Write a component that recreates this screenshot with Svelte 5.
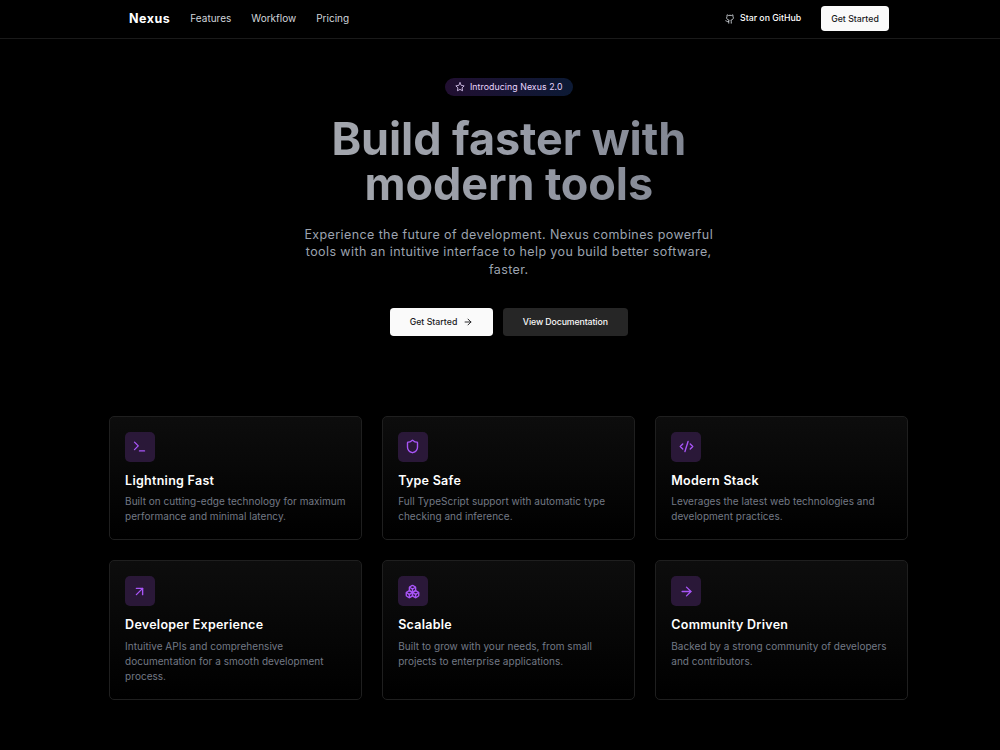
<script>
  const navLinks = ['Features', 'Workflow', 'Pricing'];

  // Feature cards, icons are 24x24 stroke paths
  const features = [
    {
      title: 'Lightning Fast',
      description: 'Built on cutting-edge technology for maximum performance and minimal latency.',
      icon: ['m4 17 6-6-6-6', 'M12 19h8']
    },
    {
      title: 'Type Safe',
      description: 'Full TypeScript support with automatic type checking and inference.',
      icon: [
        'M20 13c0 5-3.5 7.5-7.66 8.95a1 1 0 0 1-.67-.01C7.5 20.5 4 18 4 13V6a1 1 0 0 1 1-1c2 0 4.5-1.2 6.24-2.72a1.17 1.17 0 0 1 1.52 0C14.51 3.81 17 5 19 5a1 1 0 0 1 1 1z'
      ]
    },
    {
      title: 'Modern Stack',
      description: 'Leverages the latest web technologies and development practices.',
      icon: ['m18 16 4-4-4-4', 'm6 8-4 4 4 4', 'm14.5 4-5 16']
    },
    {
      title: 'Developer Experience',
      description: 'Intuitive APIs and comprehensive documentation for a smooth development process.',
      icon: ['M7 7h10v10', 'M7 17 17 7']
    },
    {
      title: 'Scalable',
      description: 'Built to grow with your needs, from small projects to enterprise applications.',
      icon: [
        'M2.97 12.92A2 2 0 0 0 2 14.63v3.24a2 2 0 0 0 .97 1.71l3 1.8a2 2 0 0 0 2.06 0L12 19v-5.5l-5-3-4.03 2.42Z',
        'm7 16.5-4.74-2.85',
        'm7 16.5 5-3',
        'M7 16.5v5.17',
        'M12 13.5V19l3.97 2.38a2 2 0 0 0 2.06 0l3-1.8a2 2 0 0 0 .97-1.71v-3.24a2 2 0 0 0-.97-1.71L17 10.5l-5 3Z',
        'm17 16.5-5-3',
        'm17 16.5 4.74-2.85',
        'M17 16.5v5.17',
        'M7.97 4.42A2 2 0 0 0 7 6.13v4.37l5 3 5-3V6.13a2 2 0 0 0-.97-1.71l-3-1.8a2 2 0 0 0-2.06 0l-3 1.8Z',
        'M12 8 7.26 5.15',
        'm12 8 4.74-2.85',
        'M12 13.5V8'
      ]
    },
    {
      title: 'Community Driven',
      description: 'Backed by a strong community of developers and contributors.',
      icon: ['M5 12h14', 'm12 5 7 7-7 7']
    }
  ];

  const github = [
    'M15 22v-4a4.8 4.8 0 0 0-1-3.5c3 0 6-2 6-5.5.08-1.25-.27-2.48-1-3.5.28-1.15.28-2.35 0-3.5 0 0-1 0-3 1.5-2.64-.5-5.36-.5-8 0C6 2 5 2 5 2c-.3 1.15-.3 2.35 0 3.5A5.403 5.403 0 0 0 4 9c0 3.5 3 5.5 6 5.5-.39.49-.68 1.05-.85 1.65-.17.6-.22 1.23-.15 1.85v4',
    'M9 18c-4.51 2-5-2-7-2'
  ];
  const star = [
    'M12 2l3.09 6.26L22 9.27l-5 4.87 1.18 6.88L12 17.77l-6.18 3.25L7 14.14 2 9.27l6.91-1.01L12 2z'
  ];
  const arrow = ['M5 12h14', 'm12 5 7 7-7 7'];
</script>

{#snippet icon(paths)}
  <svg viewBox="0 0 24 24" fill="none" stroke="currentColor" stroke-width="2.2" stroke-linecap="round" stroke-linejoin="round">
    {#each paths as d}
      <path {d} />
    {/each}
  </svg>
{/snippet}

<div class="viewport">
  <div class="page">
    <header>
      <div class="container nav">
        <div class="nav-left">
          <span class="logo">Nexus</span>
          <nav>
            {#each navLinks as link}
              <a href="#{link.toLowerCase()}">{link}</a>
            {/each}
          </nav>
        </div>
        <div class="nav-right">
          <a class="github" href="#github">{@render icon(github)}Star on GitHub</a>
          <button class="btn light small">Get Started</button>
        </div>
      </div>
    </header>

    <main>
      <section class="hero">
        <div class="badge">{@render icon(star)}Introducing Nexus 2.0</div>
        <h1>Build faster with modern tools</h1>
        <p>
          Experience the future of development. Nexus combines powerful tools with an intuitive
          interface to help you build better software, faster.
        </p>
        <div class="actions">
          <button class="btn light">Get Started {@render icon(arrow)}</button>
          <button class="btn dark">View Documentation</button>
        </div>
      </section>

      <section class="container features">
        {#each features as feature}
          <div class="card">
            <div class="card-icon">{@render icon(feature.icon)}</div>
            <h3>{feature.title}</h3>
            <p>{feature.description}</p>
          </div>
        {/each}
      </section>
    </main>
  </div>
</div>

<style>
  :global(body) {
    background: #000;
  }

  .viewport {
    height: 750px;
    overflow: hidden;
    background: #000;
    color: #fff;
    font-family: Inter, sans-serif;
    font-size: 10px;
    line-height: 15px;
  }

  .page {
    width: 1017.5px;
  }

  .container {
    width: 799.3px;
    margin: 0 auto;
    box-sizing: border-box;
  }

  a {
    color: inherit;
    text-decoration: none;
  }

  h1,
  h3,
  p {
    margin: 0;
  }

  svg {
    width: 10px;
    height: 10px;
    flex-shrink: 0;
  }

  header {
    border-bottom: 1px solid #1a1a1a;
  }

  .nav {
    display: flex;
    align-items: center;
    justify-content: space-between;
    padding: 6px 19.6px 7px 20px;
  }

  .nav-left,
  .nav-right,
  nav {
    display: flex;
    align-items: center;
    gap: 20px;
  }

  .logo {
    font-size: 12.5px;
    font-weight: 700;
    letter-spacing: 0.5px;
  }

  nav {
    color: #d1d5db;
  }

  .github {
    display: flex;
    align-items: center;
    gap: 5px;
    font-size: 8.75px;
    font-weight: 500;
  }

  .github svg {
    color: #d1d5db;
  }

  .btn {
    display: flex;
    align-items: center;
    justify-content: center;
    gap: 5.5px;
    height: 28px;
    padding: 0 20px;
    border: none;
    border-radius: 3.75px;
    font-family: inherit;
    font-size: 8.75px;
    font-weight: 500;
  }

  .btn.small {
    height: 25px;
    padding: 0 10px;
  }

  .btn.light {
    background: #fafafa;
    color: #18181b;
  }

  .btn.dark {
    background: #262626;
    color: #fafafa;
    letter-spacing: -0.1px;
  }

  .hero {
    display: flex;
    flex-direction: column;
    align-items: center;
    padding: 39px 0 80px;
    text-align: center;
  }

  .badge {
    display: flex;
    align-items: center;
    gap: 5px;
    height: 18px;
    padding: 0 10px;
    border-radius: 9px;
    background: linear-gradient(to right, #210f31, #0c1a35);
    color: #e9d5ff;
    font-size: 8.75px;
    letter-spacing: 0.07px;
  }

  .badge svg {
    opacity: 0.9;
  }

  h1 {
    width: 420px;
    margin-top: 20px;
    background: linear-gradient(to right, #a5a8ae, #989ca7 50%, #7d828e);
    background-clip: text;
    color: transparent;
    font-size: 45px;
    font-weight: 700;
    line-height: 45px;
    letter-spacing: -0.1px;
  }

  .hero p {
    width: 420px;
    margin-top: 19.9px;
    color: #9ca3af;
    font-size: 12.5px;
    line-height: 17.5px;
    letter-spacing: 0.4px;
  }

  .actions {
    display: flex;
    gap: 10px;
    margin-top: 29.5px;
  }

  .features {
    display: grid;
    grid-template-columns: repeat(3, 1fr);
    gap: 20px;
  }

  .card {
    padding: 15px 14px 14.9px 15px;
    border: 1px solid #1f1f1f;
    border-radius: 5px;
    background: linear-gradient(to bottom, #0d0d0d, #000);
  }

  .card-icon {
    display: flex;
    align-items: center;
    justify-content: center;
    width: 30px;
    height: 30px;
    border-radius: 5px;
    background: #2a1838;
    color: #a855f7;
  }

  .card-icon svg {
    width: 15px;
    height: 15px;
    margin-right: 0.5px;
  }

  h3 {
    margin-top: 10px;
    font-size: 12.5px;
    font-weight: 600;
    line-height: 17.5px;
    letter-spacing: 0.27px;
  }

  .card p {
    margin-top: 4.95px;
    color: #737985;
    letter-spacing: 0.03px;
  }
</style>
